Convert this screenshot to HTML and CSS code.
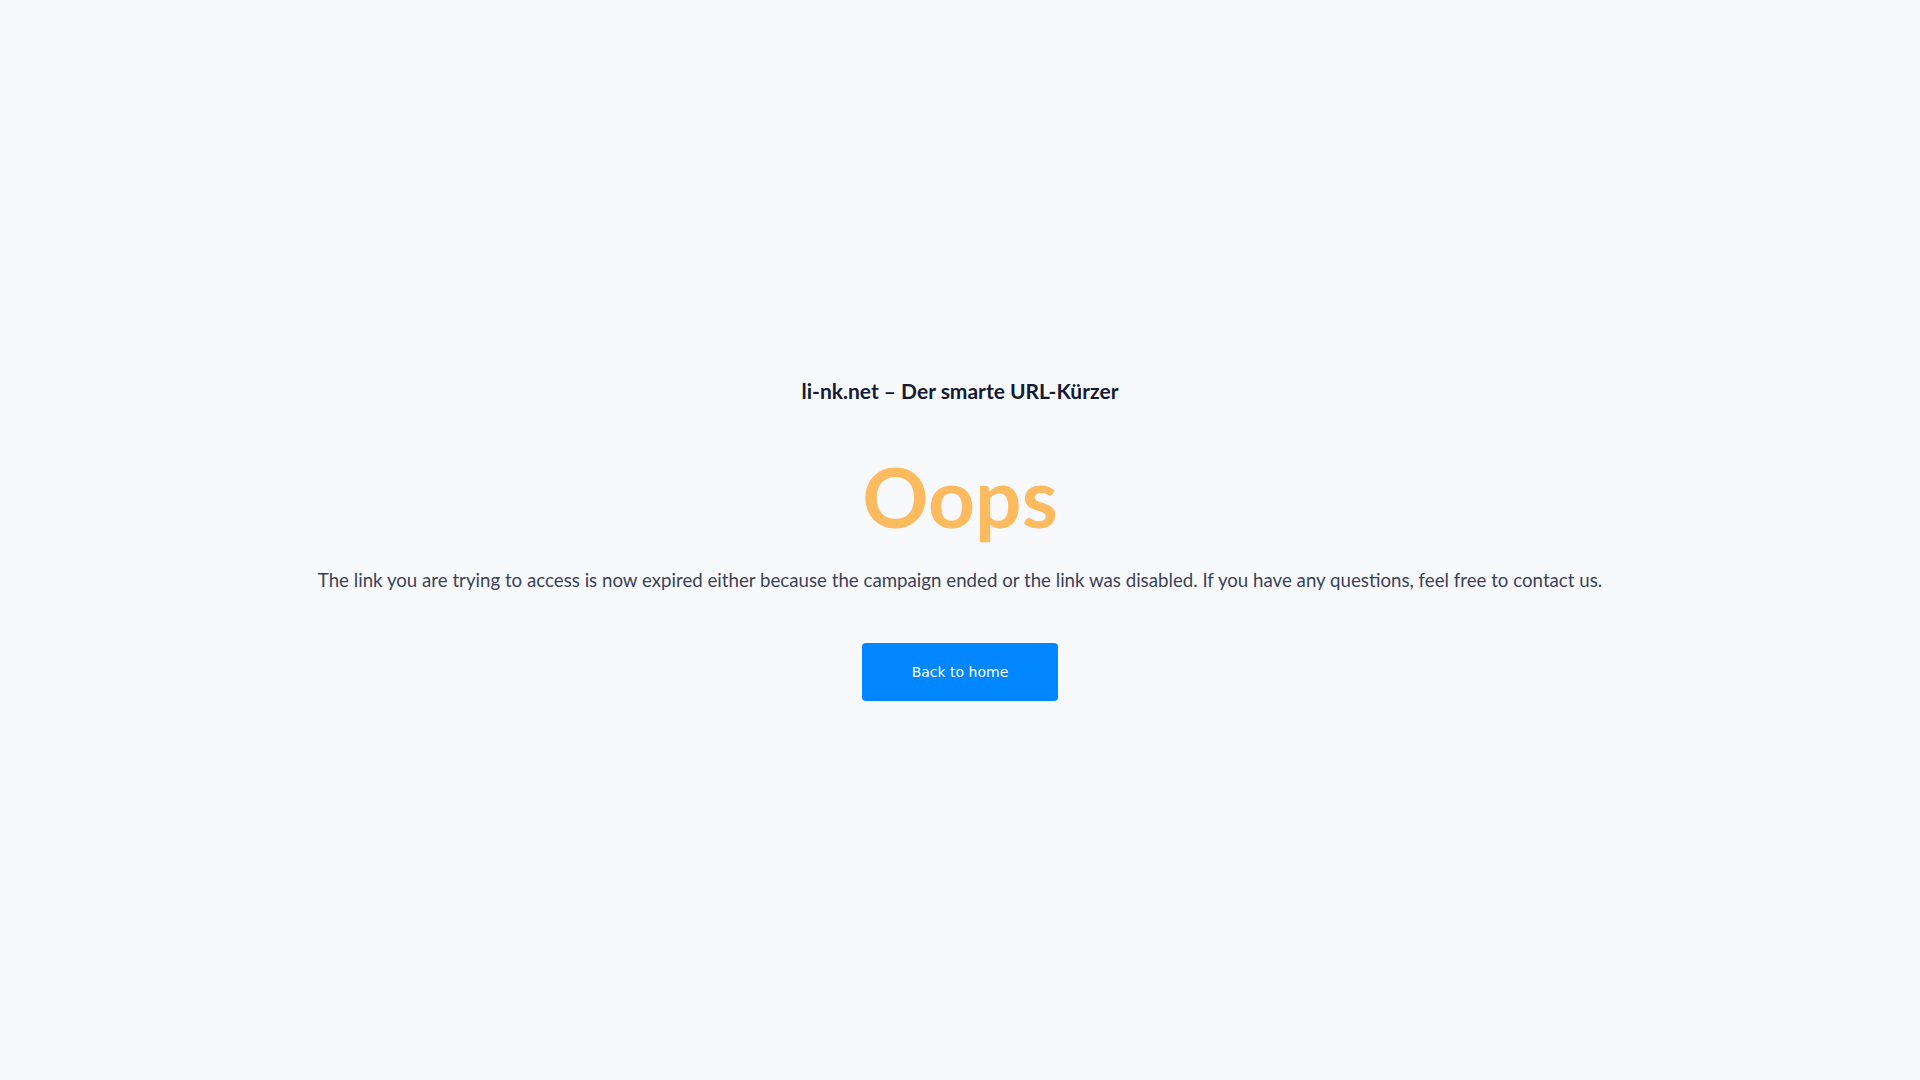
FILE: index.html
```html
<!DOCTYPE html>
<html lang="de">
<head>
<meta charset="utf-8">
<title>li-nk.net – Oops</title>
<link rel="stylesheet" href="styles.css">
</head>
<body>
<main class="page">
  <div class="content">
    <h2 class="brand">li-nk.net – Der smarte URL-Kürzer</h2>
    <h1 class="title">Oops</h1>
    <p class="message">The link you are trying to access is now expired either because the campaign ended or the link was disabled. If you have any questions, feel free to contact us.</p>
    <a class="button" href="#">Back to home</a>
  </div>
</main>
</body>
</html>
```

FILE: styles.css
```css
html, body {
  margin: 0;
  padding: 0;
  height: 100%;
}
body {
  background: #f8f9fc;
  font-family: Lato, "Noto Sans", sans-serif;
}
.page {
  height: 100vh;
  display: flex;
  align-items: center;
  justify-content: center;
}
.content {
  display: flex;
  flex-direction: column;
  align-items: center;
  text-align: center;
}
.brand {
  margin: 0;
  font-size: 21px;
  font-weight: 700;
  color: #141a33;
  line-height: 24px;
}
.title {
  margin: 43px 0 0;
  font-size: 82px;
  font-weight: 700;
  color: #fdba5f;
  line-height: 100px;
}
.message {
  margin: 20px 0 0;
  font-size: 18.7px;
  color: #3b4257;
  line-height: 28px;
}
.button {
  margin-top: 49px;
  display: flex;
  align-items: center;
  justify-content: center;
  width: 196px;
  height: 58px;
  border-radius: 4px;
  background: #0086ff;
  color: #ffffff;
  font-family: "DejaVu Sans", sans-serif;
  font-size: 14px;
  text-decoration: none;
}
```
